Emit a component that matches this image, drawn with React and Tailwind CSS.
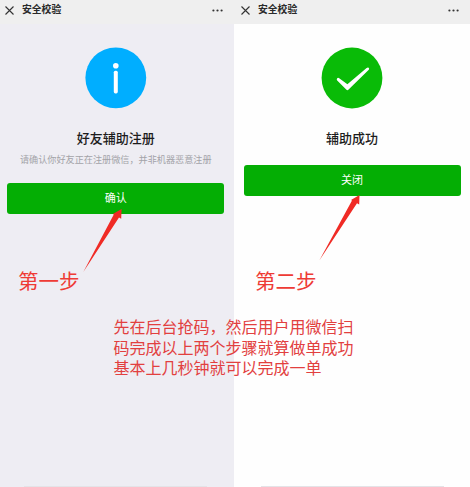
import React from 'react'

function TopBar({ className }) {
  return (
    <div className={`flex h-6 items-center self-stretch bg-[#efefef] text-[#2a2a2a] ${className}`}>
      <svg className="mt-[-4px] h-[9px] w-[9px]" viewBox="0 0 9 9" fill="none" stroke="#333" strokeWidth="1.1">
        <path d="M0.5 0.5 8.5 8.5M8.5 0.5 0.5 8.5" />
      </svg>
      <span className="mt-[-4px] ml-2 text-[9.8px] leading-none font-bold whitespace-nowrap">安全校验</span>
      <svg className="mt-[-3px] ml-auto h-[3px] w-[11px]" viewBox="0 0 11 3" fill="#333">
        <circle cx="1.4" cy="1.5" r="1.1" />
        <circle cx="5.5" cy="1.5" r="1.1" />
        <circle cx="9.6" cy="1.5" r="1.1" />
      </svg>
    </div>
  )
}

function InfoIcon() {
  return (
    <svg className="h-[62px] w-[62px]" viewBox="0 0 62 62">
      <circle cx="30.8" cy="30.8" r="30.4" fill="#00aeff" />
      <circle cx="30.8" cy="18.8" r="2.8" fill="#fff" />
      <rect x="28.8" y="23.7" width="4" height="22.7" rx="1.6" fill="#fff" />
    </svg>
  )
}

function SuccessIcon() {
  return (
    <svg className="h-[62px] w-[62px]" viewBox="0 0 62 62">
      <circle cx="31" cy="31" r="30.4" fill="#09bb07" />
      <path d="M16.2 31.2Q15.2 32.4 16.2 33.6L25.2 42.6Q26.4 43.8 27.6 42.6L47.8 22.8Q48.6 21.6 47.7 20.8Q46.8 20.1 45.6 21L26.4 37.2L18.2 31.2Q17 30.4 16.2 31.2Z" fill="#fff" />
    </svg>
  )
}

function Screen({ className, barClass, bodyClass, icon, title, desc, button }) {
  return (
    <div className={`flex h-full flex-col ${className}`}>
      <TopBar className={barClass} />
      <div className={`flex flex-1 flex-col items-center pt-[23px] ${bodyClass}`}>
        {icon}
        <h1 className="mt-[21px] h-[17px] text-[13px] leading-4 font-medium text-[#1c1c1c]">{title}</h1>
        {desc && <p className="mt-[7px] h-[11px] text-[9.15px] leading-[11px] whitespace-nowrap text-[#a3a3a8]">{desc}</p>}
        <button className="mt-[18px] h-[30.5px] w-[217px] rounded-[3px] bg-[#04ae04] pb-px text-[11px] leading-none text-white">
          {button}
        </button>
        <div className="mt-auto h-px w-[183px] bg-[#e4e3e7]" />
      </div>
    </div>
  )
}

export default function App() {
  return (
    <div className="relative flex h-[487px] w-[470px] overflow-hidden bg-white font-['Noto_Sans_CJK_SC',sans-serif]">
      <Screen
        className="w-[234px] bg-[#eeedf3]"
        barClass="pl-[5px] pr-[11px]"
        bodyClass="pr-[2.4px]"
        icon={<InfoIcon />}
        title="好友辅助注册"
        desc="请确认你好友正在注册微信，并非机器恶意注册"
        button="确认"
      />
      <Screen
        className="w-[236px] bg-[#fefefe]"
        barClass="pl-[7px] pr-[11px]"
        bodyClass="pr-0"
        icon={<SuccessIcon />}
        title="辅助成功"
        button="关闭"
      />

      {/* hand-made notes on top of both screens */}
      <svg className="absolute inset-0 h-full w-full" viewBox="0 0 470 487" fill="#f02b25">
        <path d="M83.3 272 113.8 214.6 112.8 214 121.6 209 121.2 218.8 119 217.4Z" />
        <path d="M319.3 260.5 352 200.5 351 200 359.5 195 359.2 204.6 357 203.3Z" />
      </svg>
      <span className="absolute top-[268px] left-[18px] text-[20.5px] leading-6 whitespace-nowrap text-[#ee3b35]">第一步</span>
      <span className="absolute top-[268px] left-[255px] text-[20.5px] leading-6 whitespace-nowrap text-[#ee3b35]">第二步</span>
      <p className="absolute top-[316px] left-[113.5px] text-[16px] leading-[20.7px] whitespace-nowrap text-[#e2403f]">
        先在后台抢码，然后用户用微信扫
        <br />
        码完成以上两个步骤就算做单成功
        <br />
        基本上几秒钟就可以完成一单
      </p>
    </div>
  )
}
